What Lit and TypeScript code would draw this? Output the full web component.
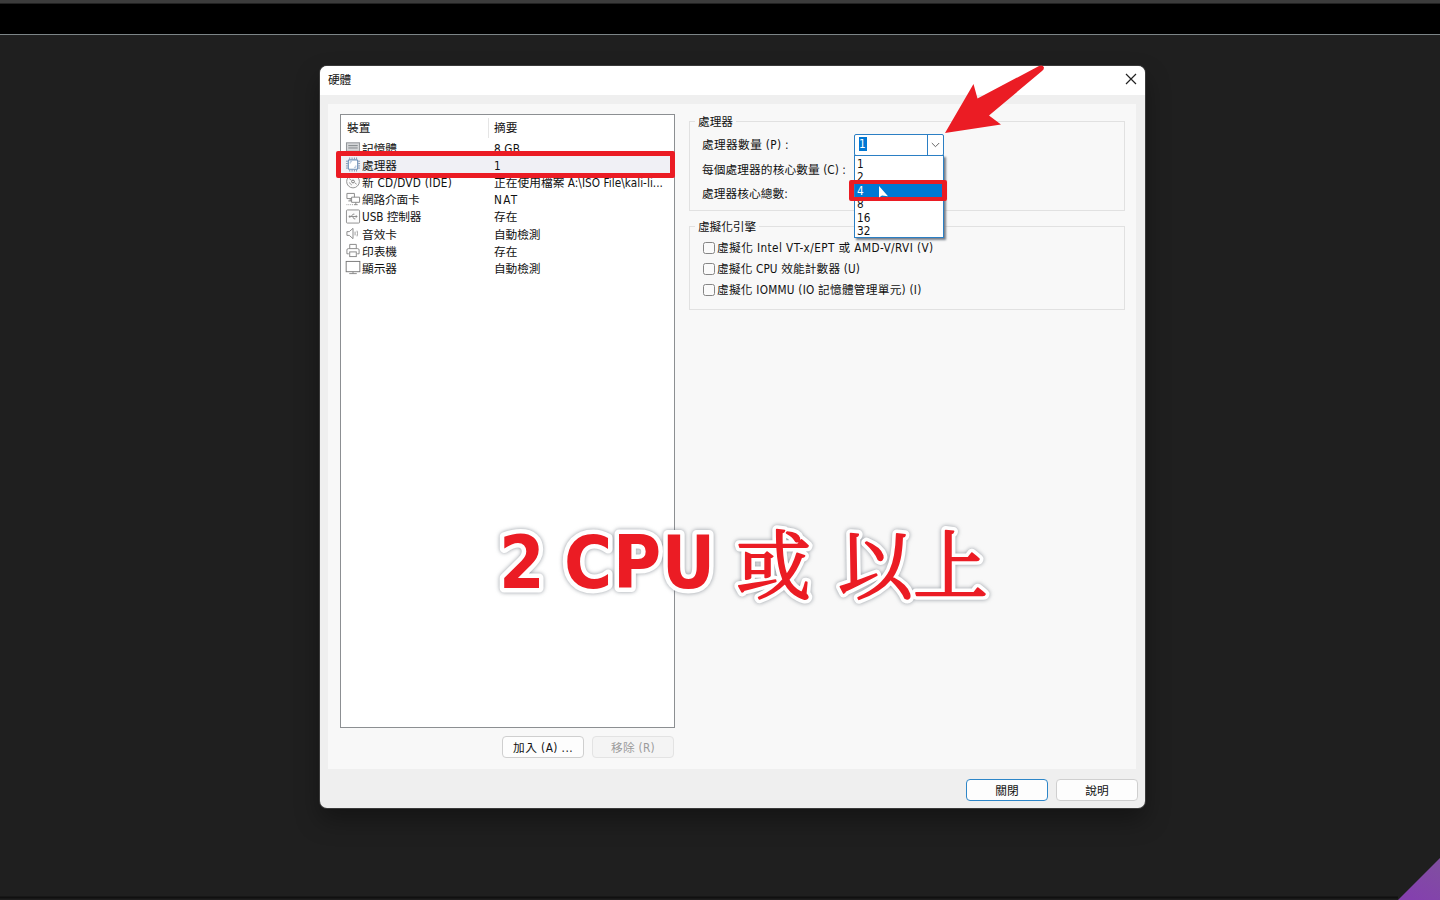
import { LitElement, html, svg, css } from "lit";
import { customElement, property } from "lit/decorators.js";

/** Text run spread to an exact advance width. */
@customElement("ui-text")
class UiText extends LitElement {
  @property() text = "";
  @property({ type: Number }) w = 0;
  static styles = css`
    :host { display: inline-block; white-space: pre; line-height: 16px; }
    span { display: inline-block; }
  `;
  render() {
    return html`<span>${this.text}</span>`;
  }
  updated() {
    const s = this.renderRoot.querySelector("span") as HTMLElement;
    s.style.letterSpacing = "0px";
    if (this.w) {
      const n = [...this.text].length;
      s.style.letterSpacing = (this.w - s.getBoundingClientRect().width) / n + "px";
    }
  }
}

const t = (text: string, w = 0) => html`<ui-text .text=${text} .w=${w}></ui-text>`;

const icons: Record<string, unknown> = {
  memory: svg`<rect x="1" y="3" width="14" height="9" fill="#d4d6d8" stroke="#8d9194"/><path d="M3 6h10M3 8.5h10" stroke="#7c8083"/><path d="M3 12v2M6 12v2M9 12v2M12 12v2" stroke="#999"/>`,
  cpu: svg`<rect x="3" y="3" width="10" height="10" rx="1" fill="#fff" stroke="#6c8fb8" stroke-width="1.2"/><path d="M4.500.5v2M7 .5v2M9.500.5v2M11.800.5v2M4.500 13.500v2M7 13.500v2M9.500 13.500v2M11.800 13.500v2M.5 4.500h2M.5 7h2M.5 9.500h2M.5 11.800h2M13.500 4.500h2M13.500 7h2M13.500 9.500h2M13.500 11.800h2" stroke="#7d93ae" stroke-width="1"/><path d="M5 7V5h2M11 9v2H9" fill="none" stroke="#a9bdd6"/>`,
  disc: svg`<circle cx="8" cy="8" r="6.800" fill="#fafafa" stroke="#8f8f8f"/><circle cx="8" cy="8" r="1.500" fill="none" stroke="#777"/><path d="M4 5l2.300 1.700M9.700 9.300L12 11M4.300 9q.5 2 2.500 2.700" stroke="#999" fill="none"/>`,
  net: svg`<path d="M1.500 1.500h8v5.500h-8zM3 9.500h4M5 7v2.500" fill="#fff" stroke="#858585"/><path d="M6.500 5.500h8.500V11h-8.500zM9 13.500h4M11 11v2.500" fill="#fff" stroke="#858585"/><path d="M1 13.500h7" stroke="#999" stroke-dasharray="1 1"/>`,
  usb: svg`<rect x="1" y="1" width="14" height="14" rx="1" fill="#fcfcfc" stroke="#8c8c8c"/><path d="M4 8h8M6 8l2-2.500h1.500M7.500 8l1.500 2.500h1.500" fill="none" stroke="#8a8a8a"/><circle cx="4.500" cy="8" r="1.200" fill="#8a8a8a"/><path d="M11 6.500L13 8l-2 1.500z" fill="#8a8a8a"/>`,
  sound: svg`<path d="M1.500 6h2.500l4-3.500v11L4 10H1.500z" fill="#fff" stroke="#858585"/><path d="M10.200 6v4M12.300 5q1 3 0 6" stroke="#999" fill="none"/>`,
  printer: svg`<path d="M4.500 6V1.500h7V6" fill="#fff" stroke="#858585"/><path d="M3.500 11.500h-2v-4q0-1.500 1.500-1.500h10q1.500 0 1.500 1.500v4h-2" fill="#fff" stroke="#858585"/><rect x="4.500" y="9.500" width="7" height="5" fill="#fff" stroke="#858585"/>`,
  display: svg`<rect x=".7" y="1.500" width="14.600" height="11" fill="#fff" stroke="#777"/><path d="M4 14.500h8M8 12.500v2" stroke="#888"/>`,
};

const rows: [string, string, number, string, number][] = [
  ["memory", "記憶體", 35, "8 GB", 26],
  ["cpu", "處理器", 35, "1", 0],
  ["disc", "新 CD/DVD (IDE)", 90, "正在使用檔案 A:\\ISO File\\kali-li...", 169],
  ["net", "網路介面卡", 57.5, "NAT", 24.5],
  ["usb", "USB 控制器", 59.5, "存在", 23.5],
  ["sound", "音效卡", 35, "自動檢測", 46.5],
  ["printer", "印表機", 35, "存在", 23.5],
  ["display", "顯示器", 35, "自動檢測", 46.5],
];

@customElement("app-root")
class AppRoot extends LitElement {
  static styles = css`
    :host {
      display: block; position: relative; width: 1440px; height: 900px; overflow: hidden;
      background: #1f1f1f; color: #111;
      font-size: 11.700px;
      font-stretch: condensed;
      font-family: "DejaVu Sans Condensed", "DejaVu Sans", "Noto Sans CJK TC", sans-serif;
    }
    * { box-sizing: border-box; }
    .top { height: 36px; background: #000; border-top: 3px solid #3c3c3c; border-bottom: 1px solid #1f1f1f; box-shadow: inset 0 -1px #7d8587, inset 0 1px #222; }
    .win {
      margin: 30px 0 0 320px; width: 825px; height: 742px; border-radius: 7px; overflow: hidden;
      background: #efefef; display: flex; flex-direction: column;
      box-shadow: 0 0 0 1px #3a3a3a, 0 12px 24px rgba(0, 0, 0, .35);
    }
    .title { height: 29px; flex: none; background: #fff; display: flex; align-items: center; justify-content: space-between; padding: 0 8px 3px; }
    .title ui-text { padding-top: 2px; }
    .title svg { width: 12px; height: 12px; }
    .panel { margin: 9px 9px 0 8px; height: 665px; flex: none; background: #f8f8f8; display: flex; padding: 10px 11px 0 12px; gap: 14px; }
    .left { width: 335px; }
    .list { height: 614px; border: 1px solid #8c8f92; background: #fff; padding: 2px 0 0; }
    .head { display: flex; height: 22px; align-items: center; }
    .head > :first-child { width: 148px; padding: 1px 0 0 6px; border-right: 1px solid #e5e5e5; height: 20px; line-height: 18px; }
    .head > :last-child { padding-left: 5px; }
    .row { height: 17.200px; display: flex; align-items: center; padding-left: 4px; white-space: nowrap; }
    .row ui-text { padding-top: 2px; }
    .row.sel { background: #f0f0f5; }
    .row svg { width: 16px; height: 15px; margin-right: 1px; flex: none; }
    .name { width: 132px; }
    .btns { display: flex; justify-content: flex-end; gap: 8px; padding: 8px 1px 0 0; }
    .btn { width: 82px; height: 22px; border: 1px solid #cfcfcf; border-radius: 4px; background: #fdfdfd; display: flex; align-items: center; justify-content: center; }
    .btn ui-text { padding-top: 1px; }
    .btn.off { color: #9b9b9b; background: #f4f4f4; border-color: #e3e3e3; }
    .btn.def { border-color: #2e86c8; }
    .right { flex: 1; padding-top: 7px; }
    .group { border: 1px solid #e1e1e1; position: relative; }
    .legend { position: absolute; left: 5px; top: -8px; padding: 0 3px; background: #f8f8f8; height: 16px; }
    .g1 { height: 90px; padding: 12px 0 0 12px; }
    .g2 { height: 84px; margin-top: 15px; padding: 10px 0 0 13px; }
    .line { display: flex; align-items: center; height: 21px; }
    .g1 .line { height: 22px; }
    .g1 .line + .line { height: 28px; }
    .g1 .line + .line + .line { height: 19px; }
    .g1 .line:first-of-type { justify-content: space-between; padding-right: 180px; }
    .box { width: 12px; height: 12px; border: 1px solid #858585; border-radius: 2.500px; background: #fafafa; margin-right: 2px; }
    .combo { width: 90px; height: 22px; border: 1px solid #2b7fc4; background: #fff; display: flex; border-radius: 2px; justify-content: space-between; }
    .val { background: #0078d4; color: #fff; width: 8px; height: 14px; margin: 2px 0 0 4px; }
    .val ui-text { margin-top: -1px; }
    .arrow { width: 16px; border-left: 1px solid #2b7fc4; display: flex; align-items: center; justify-content: center; }
    .foot { display: flex; justify-content: flex-end; gap: 8px; padding: 10px 7px 0; }
    .menu { position: absolute; left: 854px; top: 155px; width: 90px; height: 83px; border: 1px solid #2b7fc4; background: #fff; padding-top: 1px; box-shadow: 2px 2px 2px #777f8a; }
    .opt { height: 13.400px; line-height: 13.400px; padding-left: 2px; }
    .opt ui-text { line-height: 13.400px; display: block; padding-top: 1px; }
    .opt.on { background: #0078d4; color: #fff; }
    .mark { position: absolute; border: 5px solid #eb1c24; border-radius: 2px; }
    .m1 { left: 336px; top: 151px; width: 339px; height: 27px; }
    .m2 { left: 849px; top: 180px; width: 98px; height: 21px; border-width: 4px 5px; }
    .over { position: absolute; left: 0; top: 0; width: 1440px; height: 900px; }
    .cap { stroke-linejoin: round; fill: #eb1c24; filter: drop-shadow(0 0 2px rgba(90, 100, 110, .65)); }
    .halo { stroke: #fff; stroke-width: 9px; }
    .ink .cjk { stroke: #eb1c24; stroke-width: 1.800px; }
    .lat { font-family: "DejaVu Sans Condensed", "DejaVu Sans", sans-serif; font-size: 73px; font-weight: 700; font-stretch: condensed; }
    .cjk { font: 400 75px "Noto Serif CJK TC", "Noto Sans CJK TC", serif; }
  `;
  render() {
    const caption = (cls: string) => svg`<g class=${cls}>
      <text class="lat" x="499" y="588">2</text>
      <text class="lat" x="564" y="588" textLength="151">CPU</text>
      <text class="cjk" x="736" y="593">或</text>
      <text class="cjk" x="838" y="593">以上</text>
    </g>`;
    return html`
      <div class="top"></div>
      <div class="win">
        <div class="title">${t("硬體", 23)}
          <svg viewBox="0 0 12 12"><path d="M1 1l10 10M11 1L1 11" stroke="#222" stroke-width="1.200"/></svg>
        </div>
        <div class="panel">
          <div class="left">
            <div class="list">
              <div class="head"><div>${t("裝置", 23.5)}</div><div>${t("摘要", 23.5)}</div></div>
              ${rows.map(([i, n, nw, v, vw]) => html`<div class="row ${i === "cpu" ? "sel" : ""}">
                <svg viewBox="0 0 16 16">${icons[i]}</svg><div class="name">${t(n, nw)}</div>${t(v, vw)}
              </div>`)}
            </div>
            <div class="btns"><div class="btn">${t("加入 (A) ...", 60)}</div><div class="btn off">${t("移除 (R)", 44)}</div></div>
          </div>
          <div class="right">
            <div class="group g1">
              <span class="legend">${t("處理器", 35)}</span>
              <div class="line">${t("處理器數量 (P) :", 87)}
                <div class="combo"><div class="val">${t("1")}</div><div class="arrow"><svg width="9" height="6" viewBox="0 0 9 6"><path d="M.8 1l3.700 3.700L8.200 1" fill="none" stroke="#666"/></svg></div></div>
              </div>
              <div class="line">${t("每個處理器的核心數量 (C) :", 144)}</div>
              <div class="line">${t("處理器核心總數:", 86)}</div>
            </div>
            <div class="group g2">
              <span class="legend">${t("虛擬化引擎", 58)}</span>
              <div class="line"><i class="box"></i>${t("虛擬化 Intel VT-x/EPT 或 AMD-V/RVI (V)", 216.5)}</div>
              <div class="line"><i class="box"></i>${t("虛擬化 CPU 效能計數器 (U)", 143)}</div>
              <div class="line"><i class="box"></i>${t("虛擬化 IOMMU (IO 記憶體管理單元) (I)", 204.5)}</div>
            </div>
          </div>
        </div>
        <div class="foot"><div class="btn def">${t("關閉", 23.5)}</div><div class="btn">${t("說明", 23.5)}</div></div>
      </div>
      <div class="menu">${["1", "2", "4", "8", "16", "32"].map((o) => html`<div class="opt ${o === "4" ? "on" : ""}">${t(o)}</div>`)}</div>
      <div class="mark m1"></div>
      <div class="mark m2"></div>
      <svg class="over" viewBox="0 0 1440 900">
        <defs><linearGradient id="p" x1="1" y1="0" x2=".4" y2="1"><stop offset="0" stop-color="#80509f"/><stop offset="1" stop-color="#8440ae"/></linearGradient></defs>
        <path d="M879 186v11.500l3-2 6 .8z" fill="#fff"/>
        <path d="M945 133L973.500 84l4 14.500L1039 66q4-1.500 5 1.500 0 2-2 3.500L989 115.500l12 9z" fill="#eb1c24"/>
        <path d="M1440 858v42h-42z" fill="url(#p)"/>
        <path d="M0 897.500h1398" stroke="#101010" stroke-width="2"/>
        <g class="cap">${caption("halo")}${caption("ink")}</g>
      </svg>
    `;
  }
}
